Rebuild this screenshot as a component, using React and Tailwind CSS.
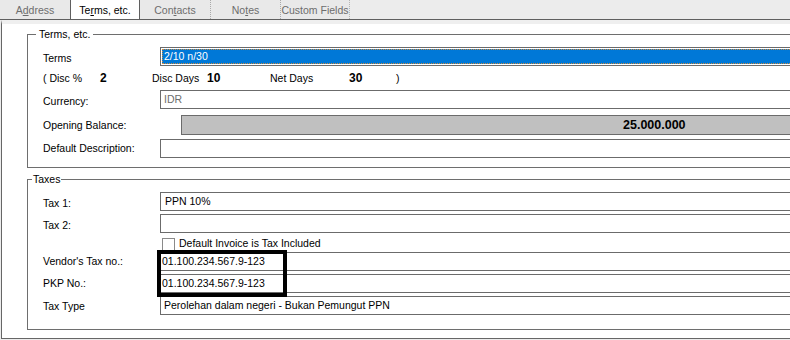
import React from 'react';

const tabs = [
  { pre: 'A', u: 'd', post: 'dress' },
  { pre: 'Te', u: 'r', post: 'ms, etc.', active: true },
  { pre: 'Con', u: 't', post: 'acts' },
  { pre: 'No', u: 't', post: 'es', sep: true },
  { pre: 'Custom Fields', u: '', post: '', sep: true, last: true },
];

const Label = ({ children, className = '' }) => (
  <span className={`w-[117px] shrink-0 ${className}`}>{children}</span>
);

const Box = ({ children, className = '' }) => (
  <div className={`h-[19px] flex-1 flex items-center border border-[#6b6b6b] bg-white whitespace-nowrap ${className}`}>
    {children}
  </div>
);

const Group = ({ title, titleClass, className = '', children }) => (
  <div className={`relative w-[800px] ml-[25px] border border-[#6e6e6e] pl-[15px] ${className}`}>
    <span className={`absolute top-[-7px] bg-white leading-[13px] ${titleClass}`}>{title}</span>
    {children}
  </div>
);

const App = () => {
  return (
    <div className="w-[790px] h-[340px] overflow-hidden bg-[#ececec] text-[10.5px] leading-[13px] text-black font-['Liberation_Sans',Arial,sans-serif]">
      {/* tab strip */}
      <div className="flex h-[20px] border-b border-[#5f5f5f]">
        {tabs.map((t) => (
          <div
            key={t.pre}
            className={`w-[70px] h-[19px] flex items-center justify-center pt-[1px] whitespace-nowrap ${
              t.active ? 'bg-white border-x border-[#5f5f5f]' : 'bg-[#e9e9e9] text-[#6d6d6d]'
            } ${t.sep ? 'border-l border-dotted border-l-[#a9a9a9]' : ''} ${t.last ? 'border-r border-r-[#b4b4b4]' : ''}`}
          >
            {t.pre}
            {t.u && <u>{t.u}</u>}
            {t.post}
          </div>
        ))}
      </div>

      {/* page */}
      <div className="ml-[1px] h-[319px] bg-white border-l border-b border-t-4 border-[#666] border-t-[#efefef] overflow-hidden">
        <Group title="Terms, etc." titleClass="left-[8px] px-[3px]" className="mt-[10px] pb-[9px]">
          <div className="flex items-center mt-[12px] h-[19px]">
            <Label className="pt-[3px]">Terms</Label>
            <Box className="p-[1px]">
              <div className="h-full w-full bg-[#0078d7] text-white border border-dotted border-[#d08a3c] flex items-center pl-[1px]">
                2/10 n/30
              </div>
            </Box>
          </div>
          <div className="flex items-center h-[24px] whitespace-nowrap">
            <span className="w-[57px]">( Disc %</span>
            <span className="w-[52px] font-bold text-[12px]">2</span>
            <span className="w-[55px]">Disc Days</span>
            <span className="w-[63px] font-bold text-[12px]">10</span>
            <span className="w-[79px]">Net Days</span>
            <span className="w-[47px] font-bold text-[12px]">30</span>
            <span>)</span>
          </div>
          <div className="flex items-center h-[19px]">
            <Label className="pt-[4px]">Currency:</Label>
            <Box className="pl-[3px] text-[#6d6d6d]">IDR</Box>
          </div>
          <div className="flex items-center mt-[6px] h-[20px]">
            <Label className="pt-[1px]">Opening Balance:</Label>
            <div className="ml-[21px] h-[20px] flex-1 flex items-center border border-[#6b6b6b] bg-[#c0c0c0] pl-[441px] font-bold text-[12.5px] whitespace-nowrap">
              25.000.000
            </div>
          </div>
          <div className="flex items-center mt-[4px] h-[19px]">
            <Label>Default Description:</Label>
            <Box />
          </div>
        </Group>

        <Group title="Taxes" titleClass="left-[4px] px-[1px]" className="mt-[11px] pb-[14px]">
          <div className="flex items-center mt-[12px] h-[19px]">
            <Label className="pt-[3px]">Tax 1:</Label>
            <Box className="pl-[4px]">PPN 10%</Box>
          </div>
          <div className="flex items-center mt-[3px] h-[19px]">
            <Label className="pt-[3px]">Tax 2:</Label>
            <Box />
          </div>
          <div className="flex items-center h-[19px]">
            <span className="w-[119px] shrink-0" />
            <span className="w-[13px] h-[13px] border border-[#8a8a8a] bg-white mt-[3px]" />
            <span className="ml-[4px] pt-[2px]">Default Invoice is Tax Included</span>
          </div>
          <div className="relative">
            <div className="flex items-center h-[19px]">
              <Label>Vendor&apos;s Tax no.:</Label>
              <Box className="pl-[1px]">01.100.234.567.9-123</Box>
            </div>
            <div className="flex items-center mt-[3px] h-[19px]">
              <Label>PKP No.:</Label>
              <Box className="pl-[1px]">01.100.234.567.9-123</Box>
            </div>
            {/* highlight frame */}
            <div className="absolute left-[114px] top-[-2px] w-[130px] h-[47px] border-4 border-black" />
          </div>
          <div className="flex items-center mt-[3px] h-[19px]">
            <Label className="pt-[1px]">Tax Type</Label>
            <Box className="pl-[3px]">Perolehan dalam negeri - Bukan Pemungut PPN</Box>
          </div>
        </Group>
      </div>
    </div>
  );
};

export default App;
